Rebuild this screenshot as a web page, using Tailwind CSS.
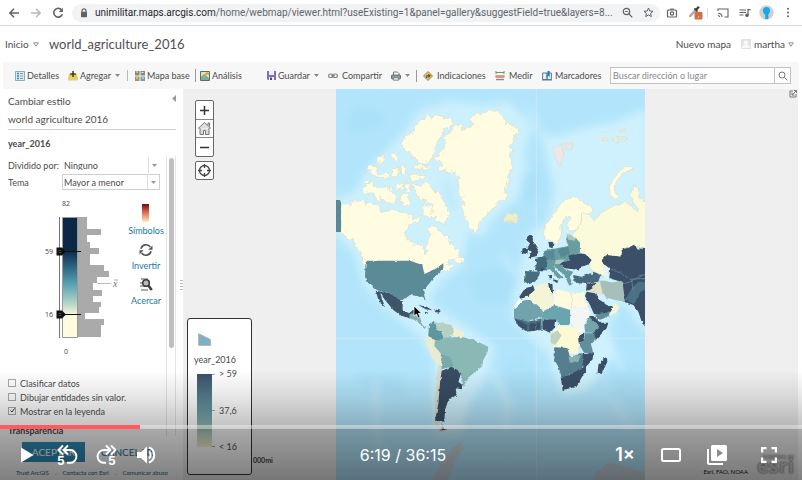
<!DOCTYPE html>
<html lang="es">
<head>
<meta charset="utf-8">
<meta name="viewport" content="width=device-width, initial-scale=1">
<title>world_agriculture_2016</title>
<script src="https://cdn.jsdelivr.net/npm/@tailwindcss/browser@4"></script>
</head>
<body class="bg-white">
<div class="relative flex h-screen flex-col overflow-hidden font-['Lato','Open_Sans',sans-serif] text-[9px] leading-none text-[#4c4c4c]">

  <!-- Browser bar -->
  <header class="flex h-[26px] shrink-0 items-center border-b border-[#d5d7da] bg-white pr-3 pl-2 text-[#5f6368]">
    <div class="flex w-16 shrink-0 items-center gap-[10px]">
      <button aria-label="Atrás"><svg class="size-3" viewBox="0 0 12 12" fill="none" stroke="currentColor" stroke-width="1.5"><path d="M11 6H2M6 1.700 1.800 6 6 10.300"/></svg></button>
      <button aria-label="Adelante" class="text-[#b4b6b9]"><svg class="size-3" viewBox="0 0 12 12" fill="none" stroke="currentColor" stroke-width="1.4"><path d="M1 6h9M6 1.700 10.200 6 6 10.300"/></svg></button>
      <button aria-label="Recargar"><svg class="size-3" viewBox="0 0 12 12" fill="none" stroke="currentColor" stroke-width="1.6"><path d="M9.900 3.400A4.400 4.400 0 1 0 10.300 7.200"/><path d="M10.900.8v4.100H6.800z" fill="currentColor" stroke="none"/></svg></button>
    </div>
    <div class="flex h-[18px] min-w-0 flex-1 items-center rounded-full bg-[#f1f3f4] pr-[6px] pl-2">
      <svg class="h-[10px] w-2 shrink-0" viewBox="0 0 8 10"><path d="M2 4V2.800a2 2 0 0 1 4 0V4" fill="none" stroke="#5f6368" stroke-width="1.200"/><rect x="1" y="3.800" width="6" height="5.400" rx=".7" fill="#5f6368"/></svg>
      <p class="ml-[7px] flex-1 overflow-hidden font-['Roboto',sans-serif] text-[10px] leading-4 whitespace-nowrap text-[#60646a]"><span class="text-[#24272b]">unimilitar.maps.arcgis.com</span>/home/webmap/viewer.html?useExisting=1&amp;panel=gallery&amp;suggestField=true&amp;layers=8...</p>
      <button aria-label="Zoom" class="mr-[10px]"><svg class="size-[11px]" viewBox="0 0 11 11" fill="none" stroke="currentColor" stroke-width="1.200"><circle cx="4.500" cy="4.500" r="3.200"/><path d="m7 7 3.300 3.300M3.200 4.500h2.600"/></svg></button>
      <button aria-label="Favorito"><svg class="size-[11px]" viewBox="0 0 11 11" fill="none" stroke="currentColor" stroke-width="1"><path d="m5.500 1 1.300 3 3.200.3-2.400 2.100.7 3.200-2.800-1.700-2.800 1.700.7-3.200L1 4.300 4.200 4z"/></svg></button>
    </div>
    <div class="ml-[6px] flex shrink-0 items-center">
      <button aria-label="Captura"><svg class="h-[10px] w-3" viewBox="0 0 12 10" fill="none" stroke="currentColor" stroke-width="1.200"><rect x="1.500" y="2" width="9" height="7" rx="1"/><path d="M4 1.200h4"/><circle cx="6" cy="5.500" r="1.700"/></svg></button>
      <button aria-label="Cuentagotas" class="ml-[10px]"><svg class="h-[15px] w-[15px]" viewBox="0 0 15 15"><path d="m1 10.500 5.500-6 1.700 1.700L3 12H1z" fill="#b5a9a4"/><path d="M5.700 4 7 2.800l.8.6L10 1l1.800 1.600L9.300 5l.7.9L8.800 7.200z" fill="#403b3b"/><rect x="6.500" y="7" width="8" height="7.500" rx="1" fill="#cf7048"/><path d="M10 11.500h1v1h-1z" fill="#fff"/></svg></button>
      <span class="ml-[4px] h-[10px] w-px bg-[#e0e2e4]"></span>
      <button aria-label="Transmitir" class="ml-[9px]"><svg class="h-[10px] w-3" viewBox="0 0 12 10" fill="none" stroke="currentColor" stroke-width="1.100"><path d="M1 3V1h10v8H7.500M1 7.500A2 2 0 0 1 2.700 9M1 5.300A4 4 0 0 1 5 9"/></svg></button>
      <button aria-label="Reproducción" class="ml-[10px]"><svg class="h-[10px] w-3" viewBox="0 0 12 10" fill="none" stroke="currentColor" stroke-width="1.200"><path d="M.5 2h6.500M.5 4.500h6.500M.5 7h4M9 7V1.600h2.500"/><circle cx="8" cy="7.300" r="1.200" fill="currentColor"/></svg></button>
      <button aria-label="Perfil" class="ml-2"><svg class="size-[15px]" viewBox="0 0 15 15"><circle cx="7.500" cy="7.500" r="7.200" fill="#cfcfcf"/><path d="M4 5.500C4 3.200 5.500 2 7.500 2S11 3.300 11 5.500c0 2-.8 3.100-1.700 3.700V14H6.200V9.500C4.700 9 4 7.500 4 5.500z" fill="#15a9e8"/></svg></button>
      <button aria-label="Menú" class="ml-3"><svg class="h-[11px] w-[4px]" viewBox="0 0 4 11" fill="currentColor"><circle cx="2" cy="1.700" r="1"/><circle cx="2" cy="5.500" r="1"/><circle cx="2" cy="9.300" r="1"/></svg></button>
    </div>
  </header>

  <!-- Application title -->
  <div class="flex h-9 shrink-0 items-center pr-2 pl-[5px] text-[10px]">
    <button class="flex w-11 items-center gap-1">Inicio<svg class="h-[5px] w-[6px]" viewBox="0 0 6 5" fill="none" stroke="#777" stroke-width=".8"><path d="M.6.800h4.800L3 4.200z"/></svg></button>
    <h1 class="text-[13px] text-[#505050]">world_agriculture_2016</h1>
    <a href="#" class="ml-auto">Nuevo mapa</a>
    <button class="ml-[10px] flex items-center gap-[3px]"><svg class="size-[10px]" viewBox="0 0 10 10"><path fill="#e2e2e2" d="M0 0h10v10H0z"/><path d="M5 1.500a2 2 0 0 1 1 4C8 6 9 7 9 9H1c0-2 1-3 3-3.500a2 2 0 0 1 1-4z" fill="#f8f8f8"/></svg>martha<svg class="h-[5px] w-[6px]" viewBox="0 0 6 5" fill="none" stroke="#777" stroke-width=".8"><path d="M.6.800h4.800L3 4.200z"/></svg></button>
  </div>

  <!-- Toolbar -->
  <nav class="mx-[3px] flex h-[27px] shrink-0 items-center bg-[#f7f7f7] pr-2 pl-3 whitespace-nowrap">
    <button class="flex w-[53px] items-center gap-[2px]"><svg class="size-[10px]" viewBox="0 0 10 10"><path d="M.5.500h9v9h-9z" fill="#dbeaf3" stroke="#8fa9b8"/><path d="M2 2.500h2M2 5h2M2 7.500h2" stroke="#378ab8" stroke-width="1.300"/><path d="M5 2.500h3M5 5h3M5 7.500h3" stroke="#8498a5"/></svg>Detalles</button>
    <button class="flex w-[59px] items-center gap-[2px]"><svg class="size-[10px]" viewBox="0 0 10 10"><path d="M1 3h8l1 6H0z" fill="#f2c83e"/><path d="M0 6h10v3.500H0z" fill="#e6cf71"/><path d="M5 0v6M2.200 3h5.600" stroke="#3c3931" stroke-width="1.500"/></svg>Agregar<svg class="ml-[2px] h-[3px] w-[5px]" viewBox="0 0 5 3" fill="#888"><path d="M0 0h5L2.500 3z"/></svg></button>
    <span class="mr-[7px] h-[11px] w-px bg-[#bbb]"></span>
    <button class="flex w-[60px] items-center gap-[2px]"><svg class="size-[10px]" viewBox="0 0 10 10"><path d="M0 0h4.500v4.500H0z" fill="#75936c"/><path d="M5.500 0H10v4.500H5.500z" fill="#918878"/><path d="M0 5.500h4.500V10H0z" fill="#b98d64"/><path d="M5.500 5.500H10V10H5.500z" fill="#65a4bd"/><path d="M1 1h2M6.500 1.500h2M1 7h2M7 7h2" stroke="#f0e7c6"/></svg>Mapa base</button>
    <span class="mr-1 h-[13px] w-px bg-[#999]"></span>
    <button class="flex w-[67px] items-center gap-[2px]"><svg class="size-[10px]" viewBox="0 0 10 10"><path d="M.5.500h9v9h-9z" fill="#d9e5b8" stroke="#596f64"/><path d="M1 6 4 3l5 4v2H1z" fill="#6cafac"/><path d="m3 7 4-5 2 1" stroke="#e69b3e" stroke-width="1.500" fill="none"/></svg>Análisis</button>
    <button class="flex w-[61px] items-center gap-[2px]"><svg class="size-[9px]" viewBox="0 0 9 9"><path d="M0 0h9v9H1L0 8z" fill="#7775ae"/><path d="M2 0h5v4H2zM2 6h5v3H2z" fill="#f0eff7"/><path d="M3 6.500h2V9H3z" fill="#514d7b"/></svg>Guardar<svg class="ml-[2px] h-[3px] w-[5px]" viewBox="0 0 5 3" fill="#888"><path d="M0 0h5L2.500 3z"/></svg></button>
    <button class="flex w-[63px] items-center gap-1"><svg class="h-[6px] w-[10px]" viewBox="0 0 10 6" fill="none" stroke="#838383" stroke-width="1.200"><rect x=".7" y="1" width="4" height="3.500" rx="1.300"/><rect x="5.300" y="1" width="4" height="3.500" rx="1.300"/><path d="M3 2.800h4"/></svg>Compartir</button>
    <button class="flex w-[25px] items-center gap-1" aria-label="Imprimir"><svg class="size-[10px]" viewBox="0 0 10 10"><path d="M2.500 4V1h4L8 2.500V4" fill="#fff" stroke="#777"/><rect x=".5" y="4" width="9" height="4" rx="1" fill="#9a9a9a" stroke="#666"/><path d="M2.500 6.500h5v2.800h-5z" fill="#c6e1ed" stroke="#777" stroke-width=".7"/></svg><svg class="h-[3px] w-[5px]" viewBox="0 0 5 3" fill="#888"><path d="M0 0h5L2.500 3z"/></svg></button>
    <span class="mr-[6px] h-3 w-px bg-[#999]"></span>
    <button class="flex w-[72px] items-center gap-1"><svg class="size-[10px]" viewBox="0 0 10 10"><path d="m5 .5 4.500 4.500L5 9.500.5 5z" fill="#e9c762" stroke="#80723f" stroke-width=".8"/><path d="M3.800 7V4.800H6M5.400 3.300 7 4.800 5.400 6.300" fill="none" stroke="#4b4635" stroke-width="1.100"/></svg>Indicaciones</button>
    <button class="flex w-[47px] items-center gap-1"><svg class="size-[10px]" viewBox="0 0 10 10"><path d="M1 1.500h8" stroke="#659b70"/><path d="M1 0v3M9 0v3" stroke="#659b70"/><path d="M.5 4h9v2.700h-9z" fill="#d97762"/><path d="M2 4v1.500M4 4v1.500M6 4v1.500M8 4v1.500" stroke="#fff" stroke-width=".6"/><path d="M1 8.500h8" stroke="#7a9d78" stroke-width="1.500"/></svg>Medir</button>
    <button class="flex w-[68px] items-center gap-[3px]"><svg class="size-[10px]" viewBox="0 0 10 10"><path d="M.6 2h4.400v6.500H.6zM5 2h4.400v6.500H5z" fill="#e7f1f5" stroke="#557e95"/><path d="M5.500 0h2.200v6L6.600 5 5.500 6z" fill="#1982ba"/><path d="M0 9h10" stroke="#557e95"/></svg>Marcadores</button>
    <form class="flex h-[17px] min-w-0 flex-1 border border-[#c3c3c3] bg-white">
      <input type="text" aria-label="Buscar dirección o lugar" placeholder="Buscar dirección o lugar" class="min-w-0 flex-1 px-[2px] text-[9px] outline-none placeholder:text-[#888]">
      <button type="button" aria-label="Buscar" class="flex w-4 items-center justify-center border-l border-[#c3c3c3]"><svg class="size-[10px]" viewBox="0 0 10 10" fill="none" stroke="#777"><circle cx="4" cy="4" r="3"/><path d="m6.300 6.300 3 3"/></svg></button>
    </form>
  </nav>

  <main class="flex min-h-0 flex-1">
    <!-- Style panel -->
    <aside class="relative flex w-[181px] shrink-0 flex-col bg-white pr-[5px] pl-2">
      <div class="flex h-[23px] items-center justify-between text-[10px]"><h2>Cambiar estilo</h2><button aria-label="Contraer panel" class="pb-1"><svg class="h-[7px] w-1" viewBox="0 0 4 7" fill="#999"><path d="M4 0v7L0 3.500z"/></svg></button></div>
      <h3 class="h-[18px] border-b border-[#cfcfcf] text-[10px] leading-[14px]">world agriculture 2016</h3>
      <p class="flex h-[26px] items-center font-bold">year_2016</p>
      <div class="relative flex flex-1 flex-col">
        <div class="flex h-[18px] items-center"><label for="split" class="w-[54px] whitespace-nowrap">Dividido por:</label>
          <div class="relative flex h-4 w-[98px] items-center"><select id="split" class="h-4 w-full appearance-none px-[2px] outline-none"><option>Ninguno</option></select><span class="pointer-events-none absolute inset-y-0 right-0 flex w-3 items-center justify-center border-l border-[#ddd]"><svg class="h-[3px] w-[5px]" viewBox="0 0 5 3" fill="#999"><path d="M0 0h5L2.500 3z"/></svg></span></div></div>
        <div class="flex h-4 items-center"><label for="theme" class="w-[54px]">Tema</label>
          <div class="relative flex h-4 w-[98px] items-center border border-[#cfcfcf]"><select id="theme" class="h-[14px] w-full appearance-none px-[1px] outline-none"><option>Mayor a menor</option></select><span class="pointer-events-none absolute inset-y-0 right-0 flex w-3 items-center justify-center border-l border-[#ddd]"><svg class="h-[3px] w-[5px]" viewBox="0 0 5 3" fill="#999"><path d="M0 0h5L2.500 3z"/></svg></span></div></div>

        <div class="flex h-[186px] pl-[34px]">
          <div class="relative w-[84px]">
            <svg class="h-[186px] w-[78px]" viewBox="42 190 78 186" font-family="'Open Sans',sans-serif" font-size="7" fill="#444">
              <defs><linearGradient id="ramp" x1="0" y1="0" x2="0" y2="1"><stop offset="0" stop-color="#0b2847"/><stop offset=".27" stop-color="#0b2847"/><stop offset=".4" stop-color="#28607b"/><stop offset=".55" stop-color="#54a0b3"/><stop offset=".7" stop-color="#a9cfc4"/><stop offset=".82" stop-color="#fffbdc"/><stop offset="1" stop-color="#fffbdc"/></linearGradient></defs>
              <path fill="#aaa" d="M77.500 217H87v12h14v6H87v7h3v6h9v6h-9v11h14v6h5v6h-12v6h-4v7h9v6h-9v6h8v5h-2v6h-14v6h19v6h-3v12H77.500z"/>
              <path d="M62.500 217.500h15v120h-15z" fill="url(#ramp)" stroke="#999"/>
              <path d="M59.500 217v121" stroke="#777"/><path d="M97 283.500h14" stroke="#bbb"/>
              <path d="M62 251.500h19M62 314.500h19" stroke="#111"/>
              <path d="M56.500 247.500h5.500l4 4-4 4h-5.500zM56.500 310.500h5.500l4 4-4 4h-5.500z" fill="#111"/><path d="M58.500 250.500h3M58.500 252.500h3M58.500 313.500h3M58.500 315.500h3" stroke="#666" stroke-width=".6"/>
              <text x="62" y="206">82</text><text x="45" y="254">59</text><text x="45" y="317">16</text><text x="64" y="354">0</text>
              <text x="113" y="287" font-family="'Liberation Serif',serif" font-style="italic" font-size="10" fill="#777">x</text><path d="M114 280h4" stroke="#888" stroke-width=".7"/>
            </svg>
            <input type="range" aria-label="Límite superior" min="0" max="82" value="59" class="absolute top-14 left-3 h-3 w-8 opacity-0">
            <input type="range" aria-label="Límite inferior" min="0" max="82" value="16" class="absolute top-[119px] left-3 h-3 w-8 opacity-0">
          </div>
          <div class="flex w-10 flex-col items-center pt-[14px] text-[#2079a0]">
            <button class="flex h-[35px] flex-col items-center justify-between pb-1"><svg class="h-[18px] w-[7px]" viewBox="0 0 7 18"><defs><linearGradient id="warm" x1="0" y1="0" x2="0" y2="1"><stop stop-color="#6e0c12"/><stop offset=".45" stop-color="#d96a4a"/><stop offset="1" stop-color="#ffe9cd"/></linearGradient></defs><path fill="url(#warm)" d="M0 0h7v18H0z"/></svg>Símbolos</button>
            <button class="mt-1 flex h-[31px] flex-col items-center justify-between pb-1"><svg class="size-[14px]" viewBox="0 0 14 14" fill="none" stroke="#555" stroke-width="1.700"><path d="M2 5.700A5.200 5.200 0 0 1 11.300 4M12 8.300A5.200 5.200 0 0 1 2.700 10"/><path d="M13.500 2.500v4.200H9.300zM.5 11.500V7.300h4.200z" fill="#555" stroke="none"/></svg>Invertir</button>
            <button class="mt-1 flex h-[31px] flex-col items-center justify-between pb-1"><svg class="size-[14px]" viewBox="0 0 14 14"><path d="M2 0h7v2H2zM1 4h4v2H1zM1 7h6v2H1zM2 11h7v2H2z" fill="#aaa"/><circle cx="7" cy="5" r="3.300" fill="#bbb" stroke="#3b3b3b" stroke-width="1.600"/><path d="m9.300 7.500 3.500 4.500" stroke="#3b3b3b" stroke-width="2.500"/></svg>Acercar</button>
          </div>
        </div>

        <label class="flex h-[14px] items-center gap-1"><input type="checkbox" class="size-2 appearance-none border border-[#aaa] bg-white">Clasificar datos</label>
        <label class="flex h-[14px] items-center gap-1"><input type="checkbox" class="size-2 appearance-none border border-[#aaa] bg-white">Dibujar entidades sin valor.</label>
        <label class="relative flex h-[14px] items-center gap-1"><input type="checkbox" checked class="size-2 appearance-none border border-[#aaa] bg-white"><svg class="pointer-events-none absolute top-1 left-[2px] size-[5px]" viewBox="0 0 5 5" fill="none" stroke="#333"><path d="m.5 2.500 1.500 1.500L4.500.500"/></svg>Mostrar en la leyenda</label>
        <p class="mt-[6px] h-[14px] leading-[14px] font-bold">Transparencia</p>
        <div class="absolute top-0 right-0 h-[280px] w-[10px] border-x border-[#e4e4e4]"><div class="mx-auto mt-[2px] h-[190px] w-[5px] rounded-full bg-[#bfbfbf]"></div></div>
      </div>
      <div class="flex h-5 shrink-0 items-center pl-[14px] text-[10px]">
        <button class="h-5 w-[63px] bg-[#2e8cb5] text-white">ACEPTAR</button>
        <button class="ml-4 text-[#1c6e96]">CANCELAR</button>
      </div>
      <footer class="flex h-[18px] shrink-0 items-center justify-between pt-1 pr-2 pl-2 text-[6px] whitespace-nowrap text-[#1a6182]"><a href="#">Trust ArcGIS</a><span>.</span><a href="#">Contacta con Esri</a><span>.</span><a href="#">Comunicar abuso</a></footer>
    </aside>

    <!-- Map -->
    <section class="relative mr-1 ml-[2px] flex min-w-0 flex-1 justify-center bg-[#efefef]">
      <svg class="h-full w-[309px]" viewBox="3 3 927 1173" preserveAspectRatio="xMidYMin slice" role="img" aria-label="Mapa mundial">
        <defs>
          <filter id="coast" x="-5%" y="-5%" width="110%" height="110%"><feTurbulence type="fractalNoise" baseFrequency=".06" numOctaves="3" seed="4"/><feDisplacementMap in="SourceGraphic" scale="26" xChannelSelector="R" yChannelSelector="G"/></filter>
          <filter id="rough" x="-5%" y="-5%" width="110%" height="110%"><feTurbulence type="fractalNoise" baseFrequency=".08" numOctaves="2" seed="9"/><feDisplacementMap in="SourceGraphic" scale="9" xChannelSelector="R" yChannelSelector="G"/></filter>
          <filter id="soft" x="-20%" y="-20%" width="140%" height="140%"><feGaussianBlur stdDeviation="12"/></filter>
        </defs>
        <path fill="#b2e5fb" d="M0 0h940v1180H0z"/>
        <g filter="url(#soft)">
          <path fill="#cdf0fd" d="M0 330 60 310 90 250 200 140 250 70 340 40 450 50 520 40 590 110 570 190 575 240 550 330 480 390 440 450 400 430 380 540 330 570 280 640 310 660 400 720 480 780 450 880 400 950 380 1040 300 1040 290 900 300 820 250 740 150 660 90 600 60 500 0 440z"/>
          <path fill="#cff1fd" d="M940 60 850 100 750 120 650 150 620 130 640 230 660 300 640 400 580 440 560 520 540 600 530 690 600 760 640 800 680 920 750 910 840 800 820 720 860 640 940 740z"/>
          <path fill="#a4def8" d="M60 50 140 70 150 110 60 140 30 110zM320 260 350 300 370 380 340 350zM560 270 620 230 620 330 570 350z" opacity=".5"/>
          <path fill="#a4def8" d="M400 560 500 530 560 580 500 650 420 640zM500 830 560 800 610 860 600 960 520 930zM60 850 200 860 220 930 100 920zM820 840 930 820 930 960 850 950z" opacity=".5"/>
          <path fill="none" stroke="#cdeffc" stroke-width="12" d="M580 60 620 150M500 500 540 560M470 850 520 940 510 1030M830 760 860 850M120 880 130 1100M840 950 890 1020"/>
        </g>
        <path d="M604 0v1176M0 751h930" stroke="#d7edf6" stroke-width="3" opacity=".7"/>

        <!-- Arctic Canada and Greenland -->
        <g filter="url(#coast)" fill="#fffce1" stroke="#dcdcc6" stroke-width="2">
          <path d="M18 345 45 350 75 338 100 345 130 352 140 372 160 365 180 370 200 372 225 380 235 395 250 385 262 395 245 403 225 410 212 425 212 445 235 465 262 472 268 500 278 490 272 470 285 450 280 420 300 415 318 430 330 440 350 470 372 490 375 505 350 512 330 530 345 525 355 535 340 545 325 550 285 560 265 568 240 545 92 545 80 505 65 480 50 455 18 432z"/>
          <path d="M355 512 372 500 388 520 380 530 358 526zM236 290 265 285 290 290 295 310 320 325 330 350 345 378 330 390 335 415 310 400 295 385 280 370 290 350 270 335 240 320zM90 280 115 283 120 300 145 295 170 300 175 320 185 335 180 350 150 345 130 335 115 325 120 310 95 320 85 300z"/>
          <path d="M230 135 250 105 275 85 310 82 350 95 355 108 330 125 315 150 300 180 295 200 285 225 250 225 240 205 215 195 205 165 210 140zM240 230 282 238 275 248 240 245zM222 255 272 262 270 276 225 275zM100 235 120 232 128 258 160 255 160 270 125 268 98 250zM130 210 150 205 145 220 128 222zM168 195 192 205 190 220 168 215zM170 238 190 235 195 270 175 265zM198 230 214 235 212 262 200 256zM185 290 202 288 205 300 187 303zM210 285 226 285 224 308 210 305zM195 320 220 318 224 352 198 350zM265 350 295 360 290 395 264 385z"/>
          <path d="M300 210 325 180 330 165 320 155 345 135 360 110 380 110 385 125 410 110 405 90 440 75 470 65 490 72 515 95 505 105 540 118 553 130 535 150 530 180 527 210 530 240 520 270 515 300 513 330 485 350 470 368 450 390 435 400 425 435 405 420 395 395 383 375 385 350 375 310 368 270 350 250 318 250 310 240 330 228z"/>
          <path d="M503 382 530 375 550 385 547 398 523 405 507 398z" fill="#efeccb"/>
        </g>

        <!-- Northern Europe and Russia -->
        <g transform="translate(465 0)" filter="url(#rough)" stroke="#d9dcc4" stroke-width="2" fill="#fffce0">
          <path d="M160 440 165 410 185 390 205 355 225 335 260 325 280 345 300 352 312 370 290 380 275 378 274 400 264 425 238 430 230 410 243 387 228 384 212 410 215 440 200 472 186 460 170 455z"/>
          <path d="M275 375 300 380 310 400 325 385 330 375 350 365 365 355 390 350 405 340 430 360 440 370 445 362 430 345 420 320 435 290 445 300 447 330 470 345 470 480 440 476 425 480 400 485 395 505 345 505 340 520 358 535 350 570 335 560 300 545 295 505 265 492 262 470 235 450 262 425 275 400z" fill="#fbfbdc"/>
          <path d="M360 320 358 295 375 262 400 240 425 235 428 243 400 255 380 280 372 305 385 330 370 330z"/>
          <path d="M190 180 215 170 222 200 210 235 195 210zM225 165 250 165 245 185 228 185z" fill="#ede7e8"/>
          <path d="M335 150 350 148 352 158 336 158zM368 148 385 145 384 165 370 160zM392 145 412 150 400 158zM385 128 408 123 408 130 390 134z" fill="#eeecd4"/>
        </g>

        <!-- United States, Mexico and the Caribbean -->
        <path d="M3 336h12l3 8v88H3z" fill="#5a8796"/>
        <g transform="translate(0 486)" filter="url(#rough)">
          <path d="M92 32 225 32 262 45 268 72 300 58 325 40 325 55 295 85 275 110 265 125 272 152 260 140 225 135 205 150 190 150 165 130 130 122 100 100 90 80z" fill="#5b8b98"/>
          <path d="M122 122 165 130 192 150 203 155 203 180 222 190 240 175 238 192 220 205 195 195 175 180 150 150 135 128 150 172 132 155z" fill="#3c556a"/>
          <path d="M225 192 255 200 262 225 275 230 270 234 255 225 245 210 222 206z" fill="#86aeac"/>
          <path d="M250 165 275 170 292 181 272 178zM298 178 318 182 312 188 300 185zM270 186l8 1v4h-8z" fill="#3f5669"/>
          <path d="M282 225 300 215 308 240 325 250 326 276 300 275 280 258z" fill="#5f969f"/>
          <path d="M300 215 350 225 358 236 355 256 325 264 318 245 308 240z" fill="#b7d0c2"/>
          <path d="M355 232 388 248 382 265 358 258z" fill="#f2efcb"/>
          <path d="M268 270 285 260 303 272 300 290 315 310 320 352 310 345 290 320z" fill="#ebebcf"/>
          <path d="M310 340 322 358 314 420 304 500 318 538 335 545 312 548 298 520 300 440z" fill="#d9dcca"/>
          <path d="M300 270 325 272 328 262 385 262 415 270 460 290 458 305 445 330 440 350 405 378 385 408 378 375 350 352 320 352 317 310 298 288z" fill="#8ab9b5"/>
          <path d="M318 312 345 320 355 348 320 358z" fill="#78a9ab"/>
          <path d="M320 362 350 350 378 370 370 395 382 405 380 418 362 415 365 435 340 450 330 480 328 515 300 512 310 460 315 400zM320 520l4 16 14 4-18 1z" fill="#394e62"/>
        </g>

        <!-- Europe, Africa and Asia -->
        <g transform="translate(465 366)" filter="url(#rough)" fill="#3a4f68">
          <path d="M115 80 125 75 130 90 135 105 148 125 140 138 115 145 125 125 112 115 120 100 108 90zM98 115 115 113 112 132 95 130zM175 95 190 97 188 115 178 112z"/>
          <path fill="#6b9da2" d="M160 125 180 118 200 115 235 108 228 90 232 75 255 80 270 100 270 125 245 138 240 152 212 158 215 168 225 178 250 185 240 200 248 222 238 227 225 200 212 185 190 168 205 190 218 202 208 210 195 195 180 178 165 180 160 165z"/>
          <path fill="#5a8897" d="M162 125 190 118 196 150 165 150zM205 118 235 110 240 135 212 142z"/><path fill="#a9c9bc" d="M198 150 225 148 215 162 195 162zM232 72 258 80 252 92 232 88z"/>
          <path fill="#42687b" d="M130 145 165 138 172 160 165 180 145 185 135 180 140 160z"/><path fill="#476d7f" d="M103 183 150 185 148 195 135 215 118 222 103 215z"/>
          <path d="M235 137 260 130 285 132 305 150 295 165 272 170 265 182 250 178 225 175 210 165 214 157 240 152zM155 172l6 6-5 8-5-8zM190 208l16 4-8 7-8-5zM178 195h8v13h-8z"/>
          <path fill="#46697d" d="M250 195 275 200 300 190 330 200 325 215 290 222 265 220 250 212zM310 185l25 10-8 8-20-10z"/>
          <path d="M335 150 350 135 395 140 395 120 420 110 435 103 440 115 470 118 470 350 455 335 445 305 430 285 400 275 398 220 385 213 358 205 360 178 340 162z"/>
          <path fill="#4b7184" d="M405 270 425 235 445 215 470 215 470 235 450 245 445 265 430 282z"/><path fill="none" stroke="#6d91a0" stroke-width="2" d="M362 178 395 190 425 212 470 190M398 222 430 212M420 208 470 205M425 212 430 240"/>
          <path fill="#e6f3f7" d="M345 165 358 175 356 208 345 200 340 180z"/>
          <path fill="#a6bfb9" d="M328 212 345 212 370 218 385 212 398 218 405 275 375 270 345 262 330 240z"/>
          <path fill="#e2e4cb" d="M318 222 330 215 338 250 322 254 292 242z"/>
          <path d="M290 222 320 218 300 240 288 242zM290 245 315 250 330 270 350 285 370 290 362 305 330 315 312 312 300 285 285 258z"/>
          <path fill="#5f8d9c" d="M315 315 345 308 360 304 355 320 322 332z"/><path fill="#f8f4cf" d="M370 282 388 290 378 310 358 314 368 298z"/>
          <path d="M88 260 105 235 130 228 134 240 118 256 92 268zM173 220 187 218 189 250 180 248z"/>
          <path fill="#fff" d="M68 296 88 266 106 265 98 274 76 295z"/>
          <path fill="#f5f4d7" d="M106 262 135 242 138 225 174 220 181 248 190 270 192 288 160 302 118 270z"/>
          <path fill="#fff9df" d="M189 245 215 240 245 250 285 248 282 265 293 292 245 292 238 300 192 284z"/>
          <path fill="none" stroke="#dcdcc6" stroke-width="2" d="M245 248v44M192 284l46 15"/>
          <path fill="#f4f5f5" d="M245 292 295 292 300 312 290 335 282 365 262 362 240 340z"/>
          <path fill="#6fa3ac" d="M72 298 98 272 118 268 160 302 155 322 122 330 110 340 72 325z"/><path fill="#6ba4ae" d="M158 305 192 286 240 300 240 345 205 345 200 328 155 326z"/>
          <path fill="#4a7182" d="M72 325 115 335 155 325 155 360 110 365 85 348z"/>
          <path d="M75 328 95 335 110 345 112 362 92 352zM118 342 135 338 135 362 118 362zM140 335 150 335 150 358 140 360zM157 328 200 328 195 352 180 368 157 358z"/>
          <path fill="#fdf9d4" d="M182 372 205 347 240 347 275 365 264 385 268 405 262 432 235 430 232 412 190 410z"/><path fill="#bfd3bf" d="M182 372 205 360 215 378 195 405 182 398z"/>
          <path fill="#73a6ac" d="M283 345 298 320 325 335 338 350 315 368 285 368z"/><path d="M297 318 310 318 330 338 355 338 350 355 315 392 310 368 330 352 302 325zM264 378 282 370 284 392 266 398z"/>
          <path fill="#5f8f9a" d="M284 370 314 370 314 390 303 400 310 432 282 428 266 400 284 390z"/>
          <path fill="#557f8e" d="M193 412 232 414 240 440 262 435 268 430 285 438 288 455 268 485 240 492 230 510 215 502 205 470 190 445z"/><path fill="#87b3b0" d="M235 440 272 435 265 455 240 458z"/>
          <path d="M278 432 310 430 308 448 288 470 288 488 276 500 260 530 218 540 212 502 235 497 265 480 280 472zM330 455 350 440 352 455 335 492 323 488 325 465z"/>
        </g>

        <g filter="url(#rough)" fill="#d2cac6" opacity=".6"><path d="M290 1176 330 1106 370 1066 388 1080 360 1120 340 1176zM770 1176 785 1151 825 1121 885 1141 930 1151V1176z"/></g>
      </svg>

      <div class="absolute top-[11px] left-3 flex w-[19px] flex-col rounded-[2px] border border-[#666] bg-white">
        <button aria-label="Acercar mapa" class="flex h-[18px] items-center justify-center"><svg class="size-[9px]" viewBox="0 0 9 9" stroke="#333" stroke-width="1.500"><path d="M4.500 0v9M0 4.500h9"/></svg></button>
        <button aria-label="Extensión predeterminada" class="flex h-[19px] items-center justify-center border-y border-[#888]"><svg class="size-[15px]" viewBox="0 0 15 15" fill="#ddd" stroke="#777"><path d="M3 7v6.500h3.500v-4h2v4H12V7M1 7.500l6.500-6 6.500 6M11 4V2h1.500v3.500"/></svg></button>
        <button aria-label="Alejar mapa" class="flex h-[18px] items-center justify-center"><svg class="size-[9px]" viewBox="0 0 9 9" stroke="#333" stroke-width="1.500"><path d="M0 4.500h9"/></svg></button>
      </div>
      <button aria-label="Mi ubicación" class="absolute top-[72px] left-3 flex size-[19px] items-center justify-center rounded-[2px] border border-[#666] bg-white"><svg class="size-[13px]" viewBox="0 0 13 13" fill="none" stroke="#444" stroke-width="1.300"><circle cx="6.500" cy="6.500" r="5"/><path d="M6.500 0v4M6.500 9v4M0 6.500h4M9 6.500h4"/></svg></button>
      <button aria-label="Vista general" class="absolute top-[1px] right-[1px]"><svg class="size-2" viewBox="0 0 8 8" fill="none" stroke="#777"><path d="M4 1H1v6h6V4"/><path d="M7.500.500 3 5M3 2.500V5h2.500M5 .5h2.500V3"/></svg></button>

      <span class="absolute bottom-4 left-[70px] text-[7px] font-bold text-[#444]">000mi</span>
      <div class="absolute top-[229px] left-1 h-[157px] w-[65px] rounded-[3px] border border-[#333] bg-white pt-[14px] pl-[6px]">
        <svg class="ml-[4px] h-[13px] w-[13px]" viewBox="0 0 13 13"><path d="M.5.500 12.500 6.500v6H.5z" fill="#7db1bf" stroke="#b0bcc0"/></svg>
        <p class="mt-[7px] h-[14px] leading-[14px]">year_2016</p>
        <div class="mt-[2px] flex gap-1 pl-[3px]">
          <svg class="mt-[5px] h-[73px] w-[18px]" viewBox="0 0 18 73"><defs><linearGradient id="leg" x1="0" y1="0" x2="0" y2="1"><stop stop-color="#3b4f68"/><stop offset=".5" stop-color="#689aa5"/><stop offset=".75" stop-color="#9dbdb4"/><stop offset="1" stop-color="#f8f2cb"/></linearGradient></defs><path fill="url(#leg)" d="M0 0h15v73H0z"/><path d="M15 .5h3M15 36.500h3M15 72.500h3" stroke="#aaa"/></svg>
          <div class="flex h-[82px] flex-col justify-between"><span>&gt; 59</span><span>37,6</span><span>&lt; 16</span></div>
        </div>
      </div>
      <span class="absolute right-12 bottom-1 bg-white/20 px-[2px] py-[1px] text-[6px] whitespace-nowrap text-[#111]">Esri, FAO, NOAA</span>
      <div class="absolute right-1 bottom-0 flex flex-col items-end font-['Open_Sans',sans-serif] text-[#ccc] [text-shadow:0_0_2px_#444]"><span class="text-[5px] leading-[6px]">POWERED BY</span><span class="-mt-2 text-[20px] leading-7 font-bold">esri</span></div>
      <svg class="absolute top-[216px] left-[230px] h-[14px] w-[9px]" viewBox="0 0 9 14"><path d="M1 1v10l2.500-2 1.700 4 1.800-.8L5.400 8.300H8.500z" fill="#000" stroke="#fff" stroke-width=".7"/></svg>
      <div class="absolute top-[191px] -left-[3px] flex flex-col gap-[2px]"><i class="h-px w-[3px] bg-[#bbb]"></i><i class="h-px w-[3px] bg-[#bbb]"></i><i class="h-px w-[3px] bg-[#bbb]"></i><i class="h-px w-[3px] bg-[#bbb]"></i></div>
    </section>
  </main>

  <!-- Video player controls -->
  <div class="absolute inset-x-0 bottom-0 flex h-[110px] flex-col justify-end bg-[linear-gradient(to_bottom,transparent_0%,rgb(0_0_0/.11)_27%,rgb(0_0_0/.23)_50%,rgb(0_0_0/.34)_54%,rgb(0_0_0/.5)_100%)] text-white">
    <div class="relative h-1 bg-white/40"><div class="h-1 bg-[#ff5a5f]" style="width:17.4%"></div><input type="range" aria-label="Progreso" min="0" max="2175" value="379" class="absolute inset-0 h-1 w-full opacity-0"></div>
    <div class="grid h-[51px] grid-cols-[1fr_auto_1fr] items-center pr-4 pl-5">
      <div class="flex items-center gap-[18px]">
        <button aria-label="Reproducir"><svg class="h-4 w-[18px]" viewBox="0 0 18 16" fill="currentColor"><path d="M1 .5 13.500 8 1 15.500z"/></svg></button>
        <button aria-label="Retroceder 5 segundos"><svg class="size-[22px]" viewBox="0 0 22 22" fill="none" stroke="currentColor" stroke-width="2"><path d="M7 1.500 2.500 6 7 10.500M12 1.500 7.500 6l4.500 4.500M8 6h6a6.300 6.300 0 0 1 0 12.800h-3"/><text x="1" y="21" font-family="Inter,sans-serif" font-size="12" font-weight="700" fill="currentColor" stroke="none">5</text></svg></button>
        <button aria-label="Avanzar 5 segundos"><svg class="size-[22px]" viewBox="0 0 22 22" fill="none" stroke="currentColor" stroke-width="2"><path d="M15 1.500 19.500 6 15 10.500M10 1.500 14.500 6 10 10.500M14 6H8a6.300 6.300 0 0 0 0 12.800h2"/><text x="12" y="21" font-family="Inter,sans-serif" font-size="12" font-weight="700" fill="currentColor" stroke="none">5</text></svg></button>
        <button aria-label="Volumen"><svg class="size-[22px]" viewBox="0 0 22 22"><path d="M1 8h4l6-5.500v17L5 14H1z" fill="currentColor"/><path d="M13 7.500a4.500 4.500 0 0 1 0 7M13 3.500a8 8 0 0 1 0 15" fill="none" stroke="currentColor" stroke-width="2"/></svg></button>
      </div>
      <time class="font-['Inter',sans-serif] text-[16px]">6:19 / 36:15</time>
      <div class="flex items-center justify-end gap-6">
        <button class="w-[22px] font-['Inter',sans-serif] text-[18px] font-semibold whitespace-nowrap">1×</button>
        <button aria-label="Modo cine"><svg class="h-4 w-[22px]" viewBox="0 0 22 16" fill="none" stroke="currentColor" stroke-width="2"><rect x="2" y="2" width="18" height="12" rx="1.500"/></svg></button>
        <button aria-label="Lista"><svg class="size-[22px]" viewBox="0 0 22 22"><path d="M7 1h12.500a1.500 1.500 0 0 1 1.500 1.500v13a1.500 1.500 0 0 1-1.500 1.500H6.500A1.500 1.500 0 0 1 5 15.500v-13A1.500 1.500 0 0 1 6.500 1zM11 5v8l6-4z" fill="currentColor" fill-rule="evenodd"/><path d="M2 5v13.500A1.500 1.500 0 0 0 3.500 20H17" fill="none" stroke="currentColor" stroke-width="2"/></svg></button>
        <button aria-label="Pantalla completa" class="flex w-[34px] justify-center"><svg class="size-4" viewBox="0 0 16 16" fill="none" stroke="currentColor" stroke-width="2.200"><path d="M1.100 5.500V1.100h4.400M10.500 1.100h4.400v4.400M14.900 10.500v4.400h-4.400M5.500 14.900H1.100v-4.400"/></svg></button>
      </div>
    </div>
  </div>
</div>
</body>
</html>
